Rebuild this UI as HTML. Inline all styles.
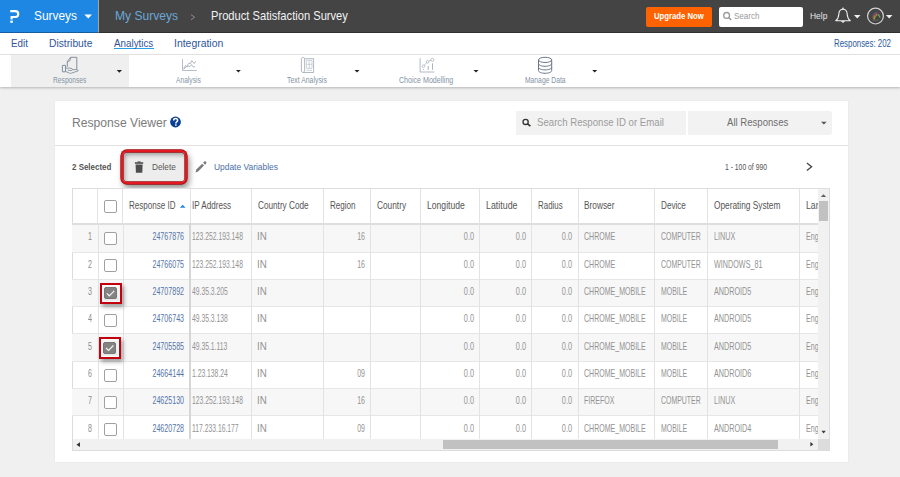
<!DOCTYPE html>
<html><head><meta charset="utf-8">
<style>
*{box-sizing:border-box;margin:0;padding:0}
html,body{width:900px;height:477px;overflow:hidden;background:#f0f0f0;font-family:"Liberation Sans",sans-serif;position:relative}
.a{position:absolute}
.t{position:absolute;white-space:nowrap;line-height:1}
svg{position:absolute;overflow:visible}
.cb{position:absolute;left:104px;width:13px;height:13px;border:1px solid #a0a0a0;border-radius:2px;background:#fff}
.vl{position:absolute;width:1px;background:#e3e3e3}
.hl{position:absolute;height:1px;background:#e6e6e6;left:72px;width:746px}
.row{position:absolute;left:72px;width:746px;background:#f7f7f7}
</style></head><body>
<!-- header -->
<div class="a" style="left:0;top:0;width:900px;height:33px;background:#444"></div>
<div class="a" style="left:0;top:0;width:98px;height:33px;background:#1e87e4"></div>
<div class="a" style="left:98px;top:0;width:1px;height:33px;background:#a9a49c"></div>
<div class="a" style="left:0;top:32px;width:900px;height:1.5px;background:rgba(0,0,0,.3)"></div>
<svg style="left:0;top:0" width="30" height="33"><path d="M10.2 11.1H15.3A2.95 2.95 0 0 1 15.3 17H11.6V19.4" fill="none" stroke="#fff" stroke-width="2.1"/><rect x="10.3" y="20.6" width="2.5" height="2.2" fill="#fff"/></svg>
<svg style="left:0;top:0" width="300" height="33"><path d="M84.4 14.4H92L88.2 18.6Z" fill="#fff"/><path d="M191 14.6L194.6 17.2L191 19.8" fill="none" stroke="#8c8c8c" stroke-width="1"/></svg>
<div class="a" style="left:646px;top:7px;width:66px;height:19.5px;background:#ff6200;border-radius:2px"></div>
<div class="a" style="left:719px;top:7px;width:84px;height:20px;background:#fff;border-radius:2px"></div>
<svg style="left:0;top:0" width="900" height="33">
 <circle cx="726.6" cy="15.4" r="2.9" fill="none" stroke="#9a9a9a" stroke-width="1.3"/><path d="M728.7 17.5L731.2 19.9" stroke="#9a9a9a" stroke-width="1.5"/>
 <path d="M835.8 20.8C837.7 19.3 838.6 17.4 838.8 14.2C839 10.9 840.6 9.2 843 9.2C845.4 9.2 847 10.9 847.2 14.2C847.4 17.4 848.3 19.3 850.2 20.8Z" fill="none" stroke="#f2f2f2" stroke-width="1.1" stroke-linejoin="round"/>
 <path d="M841.6 21.3A1.5 1.5 0 0 0 844.4 21.3" fill="#f2f2f2" stroke="#f2f2f2" stroke-width="1"/>
 <circle cx="843" cy="8.4" r="0.8" fill="#f2f2f2"/>
 <path d="M854 15H860.5L857.25 18.6Z" fill="#f0f0f0"/>
 <circle cx="875.5" cy="16.1" r="7.9" fill="none" stroke="#d2d2d2" stroke-width="1.2"/>
 <g fill="none" stroke-width="0.95" transform="translate(875.5 16.5) scale(0.85) translate(-875.5 -16.5)">
 <path d="M872.3 17.5C872.8 14.2 874.5 12.2 877 11.6" stroke="#3f7fb8"/>
 <path d="M872.8 18.6C873.3 15.3 875 13.3 877.3 12.6" stroke="#d9383a"/>
 <path d="M873.3 19.6C873.8 16.5 875.4 14.4 877.6 13.7" stroke="#f28a24"/>
 <path d="M873.9 20.3C874.4 17.5 875.8 15.6 877.8 14.8" stroke="#7cc243"/>
 <path d="M878.3 12.2C879.5 12.6 880.6 13.6 881.1 15" stroke="#8a3a6a"/>
 <path d="M878.4 13.6C879.4 14.2 880.3 15.3 880.8 16.6" stroke="#3f9fb0"/>
 <path d="M878.6 14.8C879.5 15.4 880.3 16.4 880.9 18" stroke="#8cc04a"/>
 <path d="M872 20.9H878.8" stroke="#6e6e6e" stroke-width="0.8"/>
 </g>
 <path d="M885.9 15H892.5L889.2 18.6Z" fill="#f0f0f0"/>
</svg>
<!-- nav -->
<div class="a" style="left:0;top:33px;width:900px;height:21px;background:#fff"></div>
<div class="a" style="left:0;top:53.5px;width:900px;height:1.5px;background:#e8e8e8"></div>
<div class="a" style="left:114px;top:47.5px;width:39.8px;height:1px;background:#28a0e6"></div>
<!-- toolbar -->
<div class="a" style="left:0;top:55px;width:900px;height:31.5px;background:#fff;box-shadow:0 1px 2.5px rgba(0,0,0,.25)"></div>
<div class="a" style="left:10.5px;top:55px;width:118.5px;height:31.5px;background:#efefef"></div>
<svg style="left:0;top:0" width="900" height="90">
 <g fill="none" stroke="#7d8a9a" stroke-width="0.9" stroke-linejoin="round">
  <!-- responses icon -->
  <path d="M67.3 66.8V61.5L70.6 57.3H76.8V69.6" stroke-width="0.95"/>
  <path d="M67.4 61.4C68.3 61.6 69.4 61.3 70 60.7C70.6 60 70.6 59 70.5 57.5" stroke-width="0.8"/>
  <path d="M62.4 65.4H65.5V71.8H62.4Z" stroke-width="0.95"/>
  <path d="M65.5 68.1H69.6C70.6 68.1 71.6 68.3 72.3 68.9C72.9 69.5 72.6 70.3 71.6 70.4C70.4 70.6 69 70.5 67.8 70.1" stroke-width="0.85"/>
  <path d="M65.5 71.4L69.3 73.1C69.9 73.4 70.6 73.4 71.2 73.2L78.1 70.9C78.4 70.8 78.4 70.4 78.1 70.2L76.8 69.6H72.6" stroke-width="0.85"/>
  <!-- analysis icon -->
  <path d="M182.5 59V70.5H196.7" stroke="#a3acb8" stroke-width="0.8"/>
  <path d="M183.5 68.8L185.6 65.3L187 66.8L188.7 63.3L190.5 63.6L191.8 60.6L194.3 63.5L195.8 61.2" stroke="#9aa3b0" stroke-width="0.75"/>
  <path d="M183.8 69.2L186.3 66.8L188.3 66.4L190.5 66.2L191.6 64.6L193.6 67.5L195 66" stroke="#9aa3b0" stroke-width="0.75"/>
  <!-- text analysis -->
  <path d="M303 57.4C301.9 57.4 301.4 58.1 301.4 59V71C301.4 71.9 302.1 72.5 303 72.5H313.6V58.7H304.6C304.6 58 304 57.4 303 57.4Z" stroke="#a3acb8" stroke-width="0.85"/>
  <path d="M304.6 58.7V70.8C304.6 71.6 303.9 72.2 303 72.2" stroke="#a3acb8" stroke-width="0.85"/>
  <path d="M306.4 60.3H312V68.3H306.4ZM309.2 60.3V68.3M306.4 64.3H312M306.4 70.3H312" stroke="#bcc3cc" stroke-width="0.75"/>
  <!-- choice modelling -->
  <path d="M420.1 58.2V72H434.4" stroke="#a3acb8" stroke-width="0.85"/>
  <g stroke="#a9b1bc" stroke-width="0.75">
  <circle cx="423.4" cy="66.2" r="1.3"/><circle cx="427.6" cy="61.8" r="1.3"/><circle cx="432.4" cy="59.8" r="1.5"/>
  <path d="M424.3 65.3L426.7 62.7M428.8 61.2L431 60.3"/>
  </g>
  <path d="M428.2 66V70M432.5 63.4V69.8M423.5 69V69.8" stroke="#a3acb8" stroke-width="0.9"/>
  <!-- manage data -->
  <g stroke="#6a7686" stroke-width="1">
  <ellipse cx="545.1" cy="59.9" rx="6.6" ry="2.6"/>
  <path d="M538.5 59.9V70.6C538.5 72.1 541.5 73.3 545.1 73.3C548.7 73.3 551.7 72.1 551.7 70.6V59.9"/>
  <path d="M538.5 63.6C538.5 65.1 541.5 66.3 545.1 66.3C548.7 66.3 551.7 65.1 551.7 63.6"/>
  <path d="M538.5 67.2C538.5 68.7 541.5 69.9 545.1 69.9C548.7 69.9 551.7 68.7 551.7 67.2"/>
  </g>
 </g>
 <g fill="#222">
  <path d="M116.7 70.1H122L119.35 72.8Z"/>
  <path d="M236 70H240.8L238.4 72.6Z"/>
  <path d="M354.5 70H359.5L357 72.6Z"/>
  <path d="M473.5 70H478.5L476 72.6Z"/>
  <path d="M592.2 70H597.2L594.7 72.5Z"/>
 </g>
</svg>
<!-- card -->
<div class="a" style="left:54.5px;top:100.5px;width:793.2px;height:361px;background:#fff;box-shadow:0 0 1.5px rgba(0,0,0,.08)"></div>
<svg style="left:0;top:0" width="900" height="140">
 <circle cx="175.5" cy="122" r="5.4" fill="#0b3f94"/>
 <path d="M173.6 120.6C173.6 119.3 174.5 118.6 175.6 118.6C176.8 118.6 177.6 119.3 177.6 120.4C177.6 121.6 176.2 121.8 175.9 122.9V123.4" fill="none" stroke="#fff" stroke-width="1.5"/>
 <rect x="175.1" y="124.3" width="1.5" height="1.5" fill="#fff"/>
</svg>
<div class="a" style="left:515.6px;top:111px;width:170.6px;height:24px;background:#f2f2f2"></div>
<div class="a" style="left:688.3px;top:111px;width:144px;height:24px;background:#f2f2f2;border-radius:0 3px 3px 0"></div>
<svg style="left:0;top:0" width="900" height="140">
 <circle cx="525.6" cy="121.9" r="2.6" fill="none" stroke="#333" stroke-width="1.3"/><path d="M527.5 123.8L530.4 126.2" stroke="#333" stroke-width="1.6"/>
 <path d="M821 121.7H826.7L823.85 124.5Z" fill="#555"/>
</svg>
<div class="a" style="left:54.5px;top:145px;width:793.2px;height:1.2px;background:#e2e2e2"></div>
<!-- delete highlight -->
<div class="a" style="left:120.8px;top:149.8px;width:66.4px;height:34px;border:2.8px solid #e4191f;border-radius:6px;background:#ededed;box-shadow:0 0 0 0.7px #9c0c12, 2px 4px 6px rgba(0,0,0,.45), inset 0 0 0 0.7px #9c0c12, inset 2px 3px 4px rgba(0,0,0,.32)"></div>
<svg style="left:0;top:0" width="900" height="190">
 <path d="M134.9 162.2H143.2V163.8H134.9Z" fill="#4d4d4d"/><rect x="137.6" y="161.4" width="2.9" height="1.2" fill="#4d4d4d"/>
 <path d="M135.6 164.5H142.6L142.3 172.7H135.9Z" fill="#4d4d4d"/>
 <path d="M195.6 172.4L196.3 169.6L202.2 163.7L204 165.5L198.1 171.4Z" fill="#7b7b7b"/><path d="M203.1 162.8L204.3 161.6C204.7 161.2 205.3 161.2 205.7 161.6L206.2 162.1C206.6 162.5 206.6 163.1 206.2 163.5L205 164.7Z" fill="#7b7b7b"/>
 <path d="M806.9 163L811.6 166.7L806.9 170.4" fill="none" stroke="#444" stroke-width="1.3"/>
</svg>
<!-- table -->
<div class="a" style="left:72.3px;top:188px;width:757.4px;height:262.7px;border:1px solid #dcdcdc;border-top:1.6px solid #dedede;background:#fff"></div>
<div id="rows"></div>
<div class="row" style="top:225.00px;height:26.50px"></div>
<div class="hl" style="top:251.50px"></div>
<div class="hl" style="top:278.80px"></div>
<div class="row" style="top:279.80px;height:26.30px"></div>
<div class="hl" style="top:306.10px"></div>
<div class="hl" style="top:333.40px"></div>
<div class="row" style="top:334.40px;height:26.30px"></div>
<div class="hl" style="top:360.70px"></div>
<div class="hl" style="top:388.00px"></div>
<div class="row" style="top:389.00px;height:26.30px"></div>
<div class="hl" style="top:415.30px"></div>
<div class="a" style="left:72.3px;top:223px;width:746px;height:2px;background:#dedede"></div>
<div class="vl" style="left:97.20px;top:188.8px;height:34.5px"></div>
<div class="vl" style="left:98.30px;top:223px;height:216px"></div>
<div class="vl" style="left:121.80px;top:188.8px;height:34.5px"></div>
<div class="vl" style="left:122.90px;top:223px;height:216px"></div>
<div class="vl" style="left:251.10px;top:188.8px;height:250px"></div>
<div class="vl" style="left:323.30px;top:188.8px;height:250px"></div>
<div class="vl" style="left:370.20px;top:188.8px;height:250px"></div>
<div class="vl" style="left:420.20px;top:188.8px;height:250px"></div>
<div class="vl" style="left:478.90px;top:188.8px;height:250px"></div>
<div class="vl" style="left:531.20px;top:188.8px;height:250px"></div>
<div class="vl" style="left:577.50px;top:188.8px;height:250px"></div>
<div class="vl" style="left:654.10px;top:188.8px;height:250px"></div>
<div class="vl" style="left:706.90px;top:188.8px;height:250px"></div>
<div class="vl" style="left:799.10px;top:188.8px;height:250px"></div>
<div class="vl" style="left:189.5px;top:188.8px;height:34.5px"></div>
<div class="vl" style="left:189.2px;top:223px;height:216px;width:2px;background:#d6d6d6"></div>
<span class="t" id="t_surveys" style="font-size:12.4px;top:10px;color:#fff;left:34.40px;transform-origin:0 0;transform:scaleX(0.9604);">Surveys</span>
<span class="t" id="t_mys" style="font-size:12.4px;top:10px;color:#6aa7d8;left:115.43px;transform-origin:0 0;transform:scaleX(0.9745);">My Surveys</span>
<span class="t" id="t_prod" style="font-size:12.4px;top:10px;color:#f2f2f2;left:211.10px;transform-origin:0 0;transform:scaleX(0.8993);">Product Satisfaction Survey</span>
<span class="t" id="t_upg" style="font-size:9.0px;top:12px;color:#fff;font-weight:bold;left:653.70px;transform-origin:0 0;transform:scaleX(0.8593);">Upgrade Now</span>
<span class="t" id="t_srch" style="font-size:9.0px;top:12px;color:#9a9a9a;left:734.00px;transform-origin:0 0;transform:scaleX(0.8909);">Search</span>
<span class="t" id="t_help" style="font-size:9.0px;top:12px;color:#e6e6e6;left:810.20px;transform-origin:0 0;transform:scaleX(0.9403);">Help</span>
<span class="t" id="t_edit" style="font-size:10.8px;top:38px;color:#2f559c;left:11.00px;transform-origin:0 0;transform:scaleX(0.9084);">Edit</span>
<span class="t" id="t_dist" style="font-size:10.8px;top:38px;color:#2f559c;left:49.30px;transform-origin:0 0;transform:scaleX(0.9518);">Distribute</span>
<span class="t" id="t_anal" style="font-size:10.8px;top:38px;color:#2f559c;left:114.00px;transform-origin:0 0;transform:scaleX(0.9086);">Analytics</span>
<span class="t" id="t_integ" style="font-size:10.8px;top:38px;color:#2f559c;left:174.03px;transform-origin:0 0;transform:scaleX(0.9657);">Integration</span>
<span class="t" id="t_resp" style="font-size:10.8px;top:38px;color:#2b5a9c;left:834.20px;transform-origin:0 0;transform:scaleX(0.7293);">Responses: 202</span>
<span class="t" id="t_l1" style="font-size:9.0px;top:76px;color:#8593a5;left:53.10px;transform-origin:0 0;transform:scaleX(0.7424);">Responses</span>
<span class="t" id="t_l2" style="font-size:9.0px;top:76px;color:#8593a5;left:176.00px;transform-origin:0 0;transform:scaleX(0.7409);">Analysis</span>
<span class="t" id="t_l3" style="font-size:9.0px;top:76px;color:#8593a5;left:287.20px;transform-origin:0 0;transform:scaleX(0.7658);">Text Analysis</span>
<span class="t" id="t_l4" style="font-size:9.0px;top:76px;color:#8593a5;left:399.20px;transform-origin:0 0;transform:scaleX(0.7866);">Choice Modelling</span>
<span class="t" id="t_l5" style="font-size:9.0px;top:76px;color:#8593a5;left:524.70px;transform-origin:0 0;transform:scaleX(0.7496);">Manage Data</span>
<span class="t" id="t_rv" style="font-size:12.4px;top:117px;color:#7b7b7b;left:71.52px;transform-origin:0 0;transform:scaleX(0.9795);">Response Viewer</span>
<span class="t" id="t_sr" style="font-size:10.8px;top:117px;color:#9c9c9c;left:536.70px;transform-origin:0 0;transform:scaleX(0.8927);">Search Response ID or Email</span>
<span class="t" id="t_all" style="font-size:10.8px;top:117px;color:#6e6e6e;left:727.10px;transform-origin:0 0;transform:scaleX(0.8877);">All Responses</span>
<span class="t" id="t_sel" style="font-size:9.0px;top:163px;color:#555;font-weight:bold;left:72.10px;transform-origin:0 0;transform:scaleX(0.8835);">2 Selected</span>
<span class="t" id="t_del" style="font-size:9.0px;top:163px;color:#585858;left:152.30px;transform-origin:0 0;transform:scaleX(0.9150);">Delete</span>
<span class="t" id="t_upd" style="font-size:9.0px;top:163px;color:#4a6fa8;left:214.10px;transform-origin:0 0;transform:scaleX(0.9350);">Update Variables</span>
<span class="t" id="t_pg" style="font-size:9.0px;top:163px;color:#555;left:725.20px;transform-origin:0 0;transform:scaleX(0.7563);">1 - 100 of 990</span>
<span class="t" id="h0" style="font-size:10.8px;top:200px;color:#555;left:128.80px;transform-origin:0 0;transform:scaleX(0.7442);">Response ID</span>
<span class="t" id="h1" style="font-size:10.8px;top:200px;color:#555;left:191.55px;transform-origin:0 0;transform:scaleX(0.7518);">IP Address</span>
<span class="t" id="h2" style="font-size:10.8px;top:200px;color:#555;left:257.80px;transform-origin:0 0;transform:scaleX(0.7596);">Country Code</span>
<span class="t" id="h3" style="font-size:10.8px;top:200px;color:#555;left:330.00px;transform-origin:0 0;transform:scaleX(0.7483);">Region</span>
<span class="t" id="h4" style="font-size:10.8px;top:200px;color:#555;left:376.70px;transform-origin:0 0;transform:scaleX(0.7681);">Country</span>
<span class="t" id="h5" style="font-size:10.8px;top:200px;color:#555;left:427.20px;transform-origin:0 0;transform:scaleX(0.7970);">Longitude</span>
<span class="t" id="h6" style="font-size:10.8px;top:200px;color:#555;left:485.70px;transform-origin:0 0;transform:scaleX(0.8199);">Latitude</span>
<span class="t" id="h7" style="font-size:10.8px;top:200px;color:#555;left:538.30px;transform-origin:0 0;transform:scaleX(0.7337);">Radius</span>
<span class="t" id="h8" style="font-size:10.8px;top:200px;color:#555;left:584.30px;transform-origin:0 0;transform:scaleX(0.7675);">Browser</span>
<span class="t" id="h9" style="font-size:10.8px;top:200px;color:#555;left:661.20px;transform-origin:0 0;transform:scaleX(0.7546);">Device</span>
<span class="t" id="h10" style="font-size:10.8px;top:200px;color:#555;left:713.90px;transform-origin:0 0;transform:scaleX(0.7684);">Operating System</span>
<span class="t" id="r0_n" style="font-size:10.8px;top:231px;color:#8c8c8c;right:807.80px;transform-origin:100% 0;transform:scaleX(0.6579);">1</span>
<span class="t" id="r0_id" style="font-size:10.8px;top:231px;color:#5574a8;right:716.10px;transform-origin:100% 0;transform:scaleX(0.6579);">24767876</span>
<span class="t" id="r0_ip" style="font-size:10.8px;top:231px;color:#939393;left:192.30px;transform-origin:0 0;transform:scaleX(0.6280);">123.252.193.148</span>
<span class="t" id="r0_cc" style="font-size:10.8px;top:231px;color:#939393;left:256.90px;transform-origin:0 0;transform:scaleX(0.9000);">IN</span>
<span class="t" id="r0_rg" style="font-size:10.8px;top:231px;color:#939393;right:535.10px;transform-origin:100% 0;transform:scaleX(0.6497);">16</span>
<span class="t" id="r0_lo" style="font-size:10.8px;top:231px;color:#939393;right:426.10px;transform-origin:100% 0;transform:scaleX(0.6798);">0.0</span>
<span class="t" id="r0_la" style="font-size:10.8px;top:231px;color:#939393;right:373.90px;transform-origin:100% 0;transform:scaleX(0.6798);">0.0</span>
<span class="t" id="r0_ra" style="font-size:10.8px;top:231px;color:#939393;right:327.70px;transform-origin:100% 0;transform:scaleX(0.6798);">0.0</span>
<span class="t" id="r0_br" style="font-size:10.8px;top:231px;color:#939393;left:584.30px;transform-origin:0 0;transform:scaleX(0.6509);">CHROME</span>
<span class="t" id="r0_dv" style="font-size:10.8px;top:231px;color:#939393;left:661.20px;transform-origin:0 0;transform:scaleX(0.6421);">COMPUTER</span>
<span class="t" id="r0_os" style="font-size:10.8px;top:231px;color:#939393;left:713.90px;transform-origin:0 0;transform:scaleX(0.6677);">LINUX</span>
<span class="t" id="r1_n" style="font-size:10.8px;top:259px;color:#8c8c8c;right:807.80px;transform-origin:100% 0;transform:scaleX(0.6579);">2</span>
<span class="t" id="r1_id" style="font-size:10.8px;top:259px;color:#5574a8;right:716.10px;transform-origin:100% 0;transform:scaleX(0.6579);">24766075</span>
<span class="t" id="r1_ip" style="font-size:10.8px;top:259px;color:#939393;left:192.30px;transform-origin:0 0;transform:scaleX(0.6280);">123.252.193.148</span>
<span class="t" id="r1_cc" style="font-size:10.8px;top:259px;color:#939393;left:256.90px;transform-origin:0 0;transform:scaleX(0.9000);">IN</span>
<span class="t" id="r1_rg" style="font-size:10.8px;top:259px;color:#939393;right:535.10px;transform-origin:100% 0;transform:scaleX(0.6497);">16</span>
<span class="t" id="r1_lo" style="font-size:10.8px;top:259px;color:#939393;right:426.10px;transform-origin:100% 0;transform:scaleX(0.6798);">0.0</span>
<span class="t" id="r1_la" style="font-size:10.8px;top:259px;color:#939393;right:373.90px;transform-origin:100% 0;transform:scaleX(0.6798);">0.0</span>
<span class="t" id="r1_ra" style="font-size:10.8px;top:259px;color:#939393;right:327.70px;transform-origin:100% 0;transform:scaleX(0.6798);">0.0</span>
<span class="t" id="r1_br" style="font-size:10.8px;top:259px;color:#939393;left:584.30px;transform-origin:0 0;transform:scaleX(0.6509);">CHROME</span>
<span class="t" id="r1_dv" style="font-size:10.8px;top:259px;color:#939393;left:661.20px;transform-origin:0 0;transform:scaleX(0.6421);">COMPUTER</span>
<span class="t" id="r1_os" style="font-size:10.8px;top:259px;color:#939393;left:713.90px;transform-origin:0 0;transform:scaleX(0.6677);">WINDOWS_81</span>
<span class="t" id="r2_n" style="font-size:10.8px;top:286px;color:#8c8c8c;right:807.80px;transform-origin:100% 0;transform:scaleX(0.6579);">3</span>
<span class="t" id="r2_id" style="font-size:10.8px;top:286px;color:#5574a8;right:716.10px;transform-origin:100% 0;transform:scaleX(0.6579);">24707892</span>
<span class="t" id="r2_ip" style="font-size:10.8px;top:286px;color:#939393;left:192.30px;transform-origin:0 0;transform:scaleX(0.6280);">49.35.3.205</span>
<span class="t" id="r2_cc" style="font-size:10.8px;top:286px;color:#939393;left:256.90px;transform-origin:0 0;transform:scaleX(0.9000);">IN</span>
<span class="t" id="r2_lo" style="font-size:10.8px;top:286px;color:#939393;right:426.10px;transform-origin:100% 0;transform:scaleX(0.6798);">0.0</span>
<span class="t" id="r2_la" style="font-size:10.8px;top:286px;color:#939393;right:373.90px;transform-origin:100% 0;transform:scaleX(0.6798);">0.0</span>
<span class="t" id="r2_ra" style="font-size:10.8px;top:286px;color:#939393;right:327.70px;transform-origin:100% 0;transform:scaleX(0.6798);">0.0</span>
<span class="t" id="r2_br" style="font-size:10.8px;top:286px;color:#939393;left:584.30px;transform-origin:0 0;transform:scaleX(0.6509);">CHROME_MOBILE</span>
<span class="t" id="r2_dv" style="font-size:10.8px;top:286px;color:#939393;left:661.20px;transform-origin:0 0;transform:scaleX(0.6421);">MOBILE</span>
<span class="t" id="r2_os" style="font-size:10.8px;top:286px;color:#939393;left:713.90px;transform-origin:0 0;transform:scaleX(0.6677);">ANDROID5</span>
<span class="t" id="r3_n" style="font-size:10.8px;top:313px;color:#8c8c8c;right:807.80px;transform-origin:100% 0;transform:scaleX(0.6579);">4</span>
<span class="t" id="r3_id" style="font-size:10.8px;top:313px;color:#5574a8;right:716.10px;transform-origin:100% 0;transform:scaleX(0.6579);">24706743</span>
<span class="t" id="r3_ip" style="font-size:10.8px;top:313px;color:#939393;left:192.30px;transform-origin:0 0;transform:scaleX(0.6280);">49.35.3.138</span>
<span class="t" id="r3_cc" style="font-size:10.8px;top:313px;color:#939393;left:256.90px;transform-origin:0 0;transform:scaleX(0.9000);">IN</span>
<span class="t" id="r3_lo" style="font-size:10.8px;top:313px;color:#939393;right:426.10px;transform-origin:100% 0;transform:scaleX(0.6798);">0.0</span>
<span class="t" id="r3_la" style="font-size:10.8px;top:313px;color:#939393;right:373.90px;transform-origin:100% 0;transform:scaleX(0.6798);">0.0</span>
<span class="t" id="r3_ra" style="font-size:10.8px;top:313px;color:#939393;right:327.70px;transform-origin:100% 0;transform:scaleX(0.6798);">0.0</span>
<span class="t" id="r3_br" style="font-size:10.8px;top:313px;color:#939393;left:584.30px;transform-origin:0 0;transform:scaleX(0.6509);">CHROME_MOBILE</span>
<span class="t" id="r3_dv" style="font-size:10.8px;top:313px;color:#939393;left:661.20px;transform-origin:0 0;transform:scaleX(0.6421);">MOBILE</span>
<span class="t" id="r3_os" style="font-size:10.8px;top:313px;color:#939393;left:713.90px;transform-origin:0 0;transform:scaleX(0.6677);">ANDROID5</span>
<span class="t" id="r4_n" style="font-size:10.8px;top:341px;color:#8c8c8c;right:807.80px;transform-origin:100% 0;transform:scaleX(0.6579);">5</span>
<span class="t" id="r4_id" style="font-size:10.8px;top:341px;color:#5574a8;right:716.10px;transform-origin:100% 0;transform:scaleX(0.6579);">24705585</span>
<span class="t" id="r4_ip" style="font-size:10.8px;top:341px;color:#939393;left:192.30px;transform-origin:0 0;transform:scaleX(0.6280);">49.35.1.113</span>
<span class="t" id="r4_cc" style="font-size:10.8px;top:341px;color:#939393;left:256.90px;transform-origin:0 0;transform:scaleX(0.9000);">IN</span>
<span class="t" id="r4_lo" style="font-size:10.8px;top:341px;color:#939393;right:426.10px;transform-origin:100% 0;transform:scaleX(0.6798);">0.0</span>
<span class="t" id="r4_la" style="font-size:10.8px;top:341px;color:#939393;right:373.90px;transform-origin:100% 0;transform:scaleX(0.6798);">0.0</span>
<span class="t" id="r4_ra" style="font-size:10.8px;top:341px;color:#939393;right:327.70px;transform-origin:100% 0;transform:scaleX(0.6798);">0.0</span>
<span class="t" id="r4_br" style="font-size:10.8px;top:341px;color:#939393;left:584.30px;transform-origin:0 0;transform:scaleX(0.6509);">CHROME_MOBILE</span>
<span class="t" id="r4_dv" style="font-size:10.8px;top:341px;color:#939393;left:661.20px;transform-origin:0 0;transform:scaleX(0.6421);">MOBILE</span>
<span class="t" id="r4_os" style="font-size:10.8px;top:341px;color:#939393;left:713.90px;transform-origin:0 0;transform:scaleX(0.6677);">ANDROID5</span>
<span class="t" id="r5_n" style="font-size:10.8px;top:368px;color:#8c8c8c;right:807.80px;transform-origin:100% 0;transform:scaleX(0.6579);">6</span>
<span class="t" id="r5_id" style="font-size:10.8px;top:368px;color:#5574a8;right:716.10px;transform-origin:100% 0;transform:scaleX(0.6579);">24664144</span>
<span class="t" id="r5_ip" style="font-size:10.8px;top:368px;color:#939393;left:192.30px;transform-origin:0 0;transform:scaleX(0.6280);">1.23.138.24</span>
<span class="t" id="r5_cc" style="font-size:10.8px;top:368px;color:#939393;left:256.90px;transform-origin:0 0;transform:scaleX(0.9000);">IN</span>
<span class="t" id="r5_rg" style="font-size:10.8px;top:368px;color:#939393;right:535.10px;transform-origin:100% 0;transform:scaleX(0.6497);">09</span>
<span class="t" id="r5_lo" style="font-size:10.8px;top:368px;color:#939393;right:426.10px;transform-origin:100% 0;transform:scaleX(0.6798);">0.0</span>
<span class="t" id="r5_la" style="font-size:10.8px;top:368px;color:#939393;right:373.90px;transform-origin:100% 0;transform:scaleX(0.6798);">0.0</span>
<span class="t" id="r5_ra" style="font-size:10.8px;top:368px;color:#939393;right:327.70px;transform-origin:100% 0;transform:scaleX(0.6798);">0.0</span>
<span class="t" id="r5_br" style="font-size:10.8px;top:368px;color:#939393;left:584.30px;transform-origin:0 0;transform:scaleX(0.6509);">CHROME_MOBILE</span>
<span class="t" id="r5_dv" style="font-size:10.8px;top:368px;color:#939393;left:661.20px;transform-origin:0 0;transform:scaleX(0.6421);">MOBILE</span>
<span class="t" id="r5_os" style="font-size:10.8px;top:368px;color:#939393;left:713.90px;transform-origin:0 0;transform:scaleX(0.6677);">ANDROID6</span>
<span class="t" id="r6_n" style="font-size:10.8px;top:395px;color:#8c8c8c;right:807.80px;transform-origin:100% 0;transform:scaleX(0.6579);">7</span>
<span class="t" id="r6_id" style="font-size:10.8px;top:395px;color:#5574a8;right:716.10px;transform-origin:100% 0;transform:scaleX(0.6579);">24625130</span>
<span class="t" id="r6_ip" style="font-size:10.8px;top:395px;color:#939393;left:192.30px;transform-origin:0 0;transform:scaleX(0.6280);">123.252.193.148</span>
<span class="t" id="r6_cc" style="font-size:10.8px;top:395px;color:#939393;left:256.90px;transform-origin:0 0;transform:scaleX(0.9000);">IN</span>
<span class="t" id="r6_rg" style="font-size:10.8px;top:395px;color:#939393;right:535.10px;transform-origin:100% 0;transform:scaleX(0.6497);">16</span>
<span class="t" id="r6_lo" style="font-size:10.8px;top:395px;color:#939393;right:426.10px;transform-origin:100% 0;transform:scaleX(0.6798);">0.0</span>
<span class="t" id="r6_la" style="font-size:10.8px;top:395px;color:#939393;right:373.90px;transform-origin:100% 0;transform:scaleX(0.6798);">0.0</span>
<span class="t" id="r6_ra" style="font-size:10.8px;top:395px;color:#939393;right:327.70px;transform-origin:100% 0;transform:scaleX(0.6798);">0.0</span>
<span class="t" id="r6_br" style="font-size:10.8px;top:395px;color:#939393;left:584.30px;transform-origin:0 0;transform:scaleX(0.6509);">FIREFOX</span>
<span class="t" id="r6_dv" style="font-size:10.8px;top:395px;color:#939393;left:661.20px;transform-origin:0 0;transform:scaleX(0.6421);">COMPUTER</span>
<span class="t" id="r6_os" style="font-size:10.8px;top:395px;color:#939393;left:713.90px;transform-origin:0 0;transform:scaleX(0.6677);">LINUX</span>
<span class="t" id="r7_n" style="font-size:10.8px;top:423px;color:#8c8c8c;right:807.80px;transform-origin:100% 0;transform:scaleX(0.6579);">8</span>
<span class="t" id="r7_id" style="font-size:10.8px;top:423px;color:#5574a8;right:716.10px;transform-origin:100% 0;transform:scaleX(0.6579);">24620728</span>
<span class="t" id="r7_ip" style="font-size:10.8px;top:423px;color:#939393;left:192.30px;transform-origin:0 0;transform:scaleX(0.6280);">117.233.16.177</span>
<span class="t" id="r7_cc" style="font-size:10.8px;top:423px;color:#939393;left:256.90px;transform-origin:0 0;transform:scaleX(0.9000);">IN</span>
<span class="t" id="r7_rg" style="font-size:10.8px;top:423px;color:#939393;right:535.10px;transform-origin:100% 0;transform:scaleX(0.6497);">09</span>
<span class="t" id="r7_lo" style="font-size:10.8px;top:423px;color:#939393;right:426.10px;transform-origin:100% 0;transform:scaleX(0.6798);">0.0</span>
<span class="t" id="r7_la" style="font-size:10.8px;top:423px;color:#939393;right:373.90px;transform-origin:100% 0;transform:scaleX(0.6798);">0.0</span>
<span class="t" id="r7_ra" style="font-size:10.8px;top:423px;color:#939393;right:327.70px;transform-origin:100% 0;transform:scaleX(0.6798);">0.0</span>
<span class="t" id="r7_br" style="font-size:10.8px;top:423px;color:#939393;left:584.30px;transform-origin:0 0;transform:scaleX(0.6509);">CHROME_MOBILE</span>
<span class="t" id="r7_dv" style="font-size:10.8px;top:423px;color:#939393;left:661.20px;transform-origin:0 0;transform:scaleX(0.6421);">MOBILE</span>
<span class="t" id="r7_os" style="font-size:10.8px;top:423px;color:#939393;left:713.90px;transform-origin:0 0;transform:scaleX(0.6677);">ANDROID4</span>
<div class="a" style="left:0;top:0;width:818px;height:440px;overflow:hidden">
<span class="t" id="h_lan" style="font-size:10.8px;top:200px;color:#555;left:805.80px;transform-origin:0 0;transform:scaleX(0.8100);">Language</span>
<span class="t" id="r0_lg" style="font-size:10.8px;top:231px;color:#939393;left:805.80px;transform-origin:0 0;transform:scaleX(0.6579);">English</span>
<span class="t" id="r1_lg" style="font-size:10.8px;top:259px;color:#939393;left:805.80px;transform-origin:0 0;transform:scaleX(0.6579);">English</span>
<span class="t" id="r2_lg" style="font-size:10.8px;top:286px;color:#939393;left:805.80px;transform-origin:0 0;transform:scaleX(0.6579);">English</span>
<span class="t" id="r3_lg" style="font-size:10.8px;top:313px;color:#939393;left:805.80px;transform-origin:0 0;transform:scaleX(0.6579);">English</span>
<span class="t" id="r4_lg" style="font-size:10.8px;top:341px;color:#939393;left:805.80px;transform-origin:0 0;transform:scaleX(0.6579);">English</span>
<span class="t" id="r5_lg" style="font-size:10.8px;top:368px;color:#939393;left:805.80px;transform-origin:0 0;transform:scaleX(0.6579);">English</span>
<span class="t" id="r6_lg" style="font-size:10.8px;top:395px;color:#939393;left:805.80px;transform-origin:0 0;transform:scaleX(0.6579);">English</span>
<span class="t" id="r7_lg" style="font-size:10.8px;top:423px;color:#939393;left:805.80px;transform-origin:0 0;transform:scaleX(0.6579);">English</span>
</div>
<svg style="left:0;top:0" width="900" height="220"><path d="M179.9 207.8H185.5L182.7 204.7Z" fill="#1e88e5"/></svg>
<div class="cb" style="top:200px"></div>
<div class="cb" style="top:232.10px"></div>
<div class="cb" style="top:259.40px"></div>
<div class="a" style="left:100.0px;top:282.60px;width:22px;height:21.8px;border:2px solid #c4000c;background:linear-gradient(#f6f6f6,#e4e4e4);box-shadow:2px 3px 4px rgba(0,0,0,.35), inset 0 0 0 1.5px #fafafa"></div>
<div class="cb" style="top:287.00px;left:104.1px;width:12.6px;height:12.4px;background:#838383;border-color:#777"></div>
<svg style="left:0;top:0" width="1" height="1"><path d="M106.8 293.40L109.3 295.80L114.2 290.90" fill="none" stroke="#f4f4f4" stroke-width="1.2"/></svg>
<div class="cb" style="top:314.00px"></div>
<div class="a" style="left:99.2px;top:337.20px;width:22px;height:21.8px;border:2px solid #c4000c;background:linear-gradient(#f6f6f6,#e4e4e4);box-shadow:2px 3px 4px rgba(0,0,0,.35), inset 0 0 0 1.5px #fafafa"></div>
<div class="cb" style="top:341.60px;left:103.3px;width:12.6px;height:12.4px;background:#838383;border-color:#777"></div>
<svg style="left:0;top:0" width="1" height="1"><path d="M106.0 348.00L108.5 350.40L113.4 345.50" fill="none" stroke="#f4f4f4" stroke-width="1.2"/></svg>
<div class="cb" style="top:368.60px"></div>
<div class="cb" style="top:395.90px"></div>
<div class="cb" style="top:423.20px"></div>
<!-- scrollbars -->
<div class="a" style="left:818px;top:188.8px;width:11.2px;height:250px;background:#f1f1f1"></div>
<div class="a" style="left:819.2px;top:200.8px;width:8.8px;height:20px;background:#c1c1c1"></div>
<div class="a" style="left:73px;top:438.8px;width:745px;height:11.2px;background:#f1f1f1"></div>
<div class="a" style="left:443px;top:440px;width:335.4px;height:9px;background:#c1c1c1"></div>
<div class="a" style="left:818px;top:438.8px;width:11.2px;height:11.2px;background:#dcdcdc"></div>
<svg style="left:0;top:0" width="900" height="477">
 <path d="M820.8 197H826.2L823.5 194.2Z" fill="#606060"/>
 <path d="M821.4 430.8H825.8L823.6 433.4Z" fill="#404040"/>
 <path d="M80 442.3V447L76.4 444.65Z" fill="#333"/>
 <path d="M810.4 442V446.6L813.3 444.3Z" fill="#333"/>
</svg>
</body></html>
